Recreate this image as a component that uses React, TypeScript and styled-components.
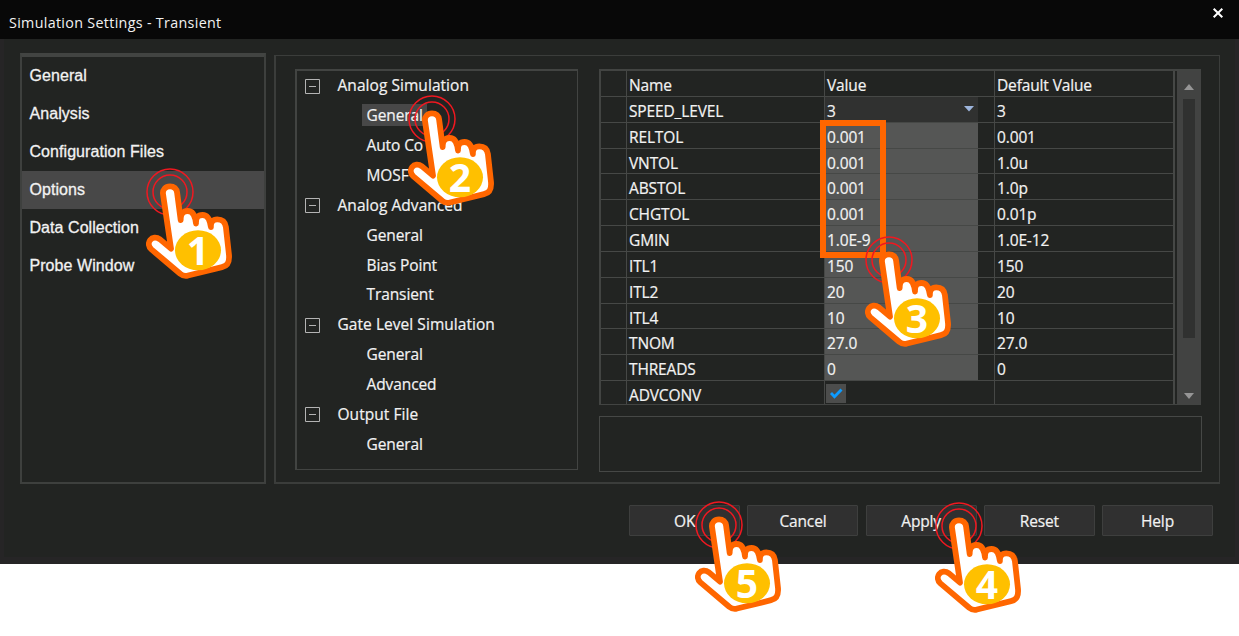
import React from "react";
import styled, { createGlobalStyle } from "styled-components";

const Global = createGlobalStyle`
  * { box-sizing: border-box; }
  body { margin: 0; background: #fff; overflow: hidden; }
`;

const Page = styled.div`
  position: relative;
  width: 1239px;
  height: 636px;
  overflow: hidden;
  background: #fff;
  color: #f2f2f2;
  font-family: "Open Sans", "Noto Sans", sans-serif;
  font-size: 15.5px;
  letter-spacing: -0.14px;
  white-space: nowrap;
  -webkit-text-stroke: 0.2px #f2f2f2;
`;

const Dialog = styled.div`
  height: 564px;
  background: #222422;
  box-shadow: inset 4px 0 #262526, inset -4px -7px #262526;
  display: flex;
  flex-direction: column;
`;

const TitleBar = styled.header`
  height: 39px;
  flex: none;
  background: #080808;
  display: flex;
  justify-content: space-between;
  padding: 12px 15px 0 9px;
  line-height: 22px;
  font-size: 14.3px;
  letter-spacing: 0.32px;
  -webkit-text-stroke: 0;
`;

const CloseIcon = styled.svg`
  width: 12px;
  height: 12px;
  margin-top: -5px;
`;

const Content = styled.div`
  display: flex;
  height: 445px;
  padding: 14px 19px 0 20px;
  gap: 8px;
`;

const Sidebar = styled.nav`
  width: 246px;
  height: 431px;
  border: 2px solid #3e403e;
  border-top: 4px solid #424442;
  font-family: "Liberation Sans", Arial, sans-serif;
  font-size: 16px;
  letter-spacing: 0.06px;
`;

const SidebarItem = styled.div<{ $active?: boolean }>`
  height: 38px;
  line-height: 38px;
  padding-left: 7.5px;
  background: ${(p) => (p.$active ? "#484848" : "transparent")};
  -webkit-text-stroke: 0.3px #f2f2f2;
`;

const Panel = styled.main`
  width: 946px;
  height: 429px;
  margin-top: 2px;
  border: 2px solid #3b3d3b;
  border-width: 1px 1px 2px 2px;
  display: flex;
  padding: 13px 16px 0 19px;
  gap: 21px;
`;

const Tree = styled.div`
  width: 283px;
  height: 401px;
  border: 1px solid #424442;
  border-width: 2px 1px 1px 2px;
  padding-left: 8px;
`;

const TreeRow = styled.div<{ $child?: boolean }>`
  height: 29.87px;
  display: flex;
  align-items: center;
  padding-left: ${(p) => (p.$child ? "57px" : "0")};
  letter-spacing: ${(p) => (p.$child ? "-0.1px" : "0.05px")};
`;

const Toggle = styled.svg`
  width: 15px;
  height: 15px;
  margin: 1px 13px 0 0;
`;

const TreeLabel = styled.span<{ $active?: boolean }>`
  height: 22px;
  line-height: 22px;
  margin-bottom: 1px;
  padding: 0 4px 0 4.5px;
  background: ${(p) => (p.$active ? "#484848" : "transparent")};
`;

const Right = styled.div`
  width: 603px;
  display: flex;
  flex-direction: column;
  gap: 11px;
`;

const TableFrame = styled.div`
  width: 602px;
  height: 336px;
  display: flex;
  justify-content: space-between;
  overflow: hidden;
  border: 2px solid #424442;
  border-right: 0;
  border-bottom-width: 1px;
`;

const Table = styled.div`
  width: 574px;
  border-right: 1px solid #464846;
`;

const Row = styled.div`
  display: grid;
  grid-template-columns: 26px 198px 170px 179px;
  height: 25.85px;
`;

const Cell = styled.div`
  border-right: 1px solid #464846;
  border-bottom: 1px solid #464846;
  padding-left: 2px;
  line-height: 28px;
  overflow: hidden;
`;

const ValueCell = styled(Cell)`
  padding: 0 16px 0 0;
`;

const Field = styled.div<{ $kind: "edit" | "select" | "plain" }>`
  height: 100%;
  padding: 0 3px 0 2px;
  display: flex;
  justify-content: space-between;
  background: ${(p) => (p.$kind === "edit" ? "#555655" : p.$kind === "select" ? "#303130" : "transparent")};
`;

const Check = styled.svg`
  width: 20px;
  height: 19px;
  margin: 3px 0 0 -1px;
`;

const Scrollbar = styled.div`
  width: 24px;
  background: #424342;
  display: flex;
  flex-direction: column;
  align-items: center;
  padding: 13px 1px 0 0;
`;

const Thumb = styled.div`
  width: 12px;
  height: 239px;
  margin: 9px 0 55px;
  background: #303130;
`;

const Arrow = styled.svg`
  display: block;
  flex: none;
`;

const SelectArrow = styled(Arrow)`
  margin-top: 9px;
`;

const Description = styled.div`
  height: 56px;
  border: 1px solid #464846;
`;

const Footer = styled.footer`
  display: flex;
  justify-content: flex-end;
  gap: 7.2px;
  padding: 21px 26px 0 0;
`;

const Button = styled.button`
  width: 111px;
  height: 31px;
  padding: 1px 0 0;
  border: 1px solid #3e3f3e;
  border-radius: 1px;
  background: #303030;
  color: inherit;
  font: inherit;
  letter-spacing: inherit;
`;

const Highlight = styled.div`
  position: absolute;
  left: 820px;
  top: 120px;
  width: 66px;
  height: 138px;
  border: 6px solid #ff6600;
`;

const HandSvg = styled.svg<{ $x: number; $y: number }>`
  position: absolute;
  left: ${(p) => p.$x}px;
  top: ${(p) => p.$y}px;
  width: 90px;
  height: 114px;
  -webkit-text-stroke: 0;
`;

const Hand = ({ n, x, y }: { n: number; x: number; y: number }) => (
  <HandSvg $x={x} $y={y} viewBox="0 0 90 114">
    <g fill="none" stroke="#f01820" strokeWidth="1.5">
      <circle cx="24" cy="24" r="23" />
      <circle cx="24" cy="24" r="17" />
    </g>
    <path
      d="M17 26C16.4 21.8 19.5 18.3 24 18.3C28 18.3 30.6 20.7 31.1 24.5L34.7 52C34.4 45.8 37.3 43 41.8 43C46.4 43 49 46.6 50 55.5C49.7 49.5 52 47 56.6 47C61.7 47 63.9 50.8 64.9 59C64.6 54 66.8 51.4 71.3 51.4C76.8 51.4 79.2 54.2 79.9 59L83 87C83.6 95 81.2 98 76 99.2L42 107.5C38.8 108.5 36.6 107.6 34.2 105.7L5.4 81.4C-1.2 75.4 6 65.7 14 71.4L25 80.6Z"
      fill="#fff"
      stroke="#ff6600"
      strokeWidth="5.8"
      strokeLinejoin="round"
    />
    <ellipse cx="52" cy="82.3" rx="23" ry="20" fill="#ffc000" />
    <text x="52" y="96.5" fill="#fff" textAnchor="middle" fontFamily="Open Sans, sans-serif" fontWeight="700" fontSize="39" letterSpacing="0">
      {n}
    </text>
  </HandSvg>
);

const sections = ["General", "Analysis", "Configuration Files", "Options", "Data Collection", "Probe Window"];

const tree = [
  { title: "Analog Simulation", items: ["General", "Auto Co", "MOSF"] },
  { title: "Analog Advanced", items: ["General", "Bias Point", "Transient"] },
  { title: "Gate Level Simulation", items: ["General", "Advanced"] },
  { title: "Output File", items: ["General"] },
];

const rows = [
  ["SPEED_LEVEL", "3", "3"],
  ["RELTOL", "0.001", "0.001"],
  ["VNTOL", "0.001", "1.0u"],
  ["ABSTOL", "0.001", "1.0p"],
  ["CHGTOL", "0.001", "0.01p"],
  ["GMIN", "1.0E-9", "1.0E-12"],
  ["ITL1", "150", "150"],
  ["ITL2", "20", "20"],
  ["ITL4", "10", "10"],
  ["TNOM", "27.0", "27.0"],
  ["THREADS", "0", "0"],
];

export default function App() {
  return (
    <>
      <Global />
      <Page>
        <Dialog>
          <TitleBar>
            <span>Simulation Settings - Transient</span>
            <CloseIcon viewBox="0 0 12 12">
              <path d="M1.7 1.7L10.3 10.3M10.3 1.7L1.7 10.3" stroke="#fff" strokeWidth="2" />
            </CloseIcon>
          </TitleBar>
          <Content>
            <Sidebar>
              {sections.map((s) => (
                <SidebarItem key={s} $active={s === "Options"}>{s}</SidebarItem>
              ))}
            </Sidebar>
            <Panel>
              <Tree>
                {tree.map((g, gi) => (
                  <React.Fragment key={g.title}>
                    <TreeRow>
                      <Toggle viewBox="0 0 15 15">
                        <path d="M.5 .5H14.5V14.5H.5ZM4 7.5H11" fill="none" stroke="#b4b4b4" />
                      </Toggle>
                      <TreeLabel>{g.title}</TreeLabel>
                    </TreeRow>
                    {g.items.map((t, i) => (
                      <TreeRow key={t} $child>
                        <TreeLabel $active={gi === 0 && i === 0}>{t}</TreeLabel>
                      </TreeRow>
                    ))}
                  </React.Fragment>
                ))}
              </Tree>
              <Right>
                <TableFrame>
                  <Table>
                    <Row>
                      <Cell />
                      <Cell>Name</Cell>
                      <Cell>Value</Cell>
                      <Cell>Default Value</Cell>
                    </Row>
                    {rows.map(([name, value, def], i) => (
                      <Row key={name}>
                        <Cell />
                        <Cell>{name}</Cell>
                        <ValueCell>
                          <Field $kind={i === 0 ? "select" : "edit"}>
                            {value}
                            {i === 0 && (
                              <SelectArrow width="12" height="6" viewBox="0 0 12 6">
                                <path d="M1 0H11L6 5.5Z" fill="#9db5dc" />
                              </SelectArrow>
                            )}
                          </Field>
                        </ValueCell>
                        <Cell>{def}</Cell>
                      </Row>
                    ))}
                    <Row>
                      <Cell />
                      <Cell>ADVCONV</Cell>
                      <ValueCell>
                        <Field $kind="plain">
                          <Check viewBox="0 0 20 19">
                            <path d="M0 0H20V19H0Z" fill="#4c4d4c" />
                            <path d="M5 9L8.5 12.7L15.5 5.5" fill="none" stroke="#0d9bff" strokeWidth="2.8" />
                          </Check>
                        </Field>
                      </ValueCell>
                      <Cell />
                    </Row>
                  </Table>
                  <Scrollbar>
                    <Arrow width="10" height="6" viewBox="0 0 10 6">
                      <path d="M0 6L5 0L10 6Z" fill="#969696" />
                    </Arrow>
                    <Thumb />
                    <Arrow width="10" height="6" viewBox="0 0 10 6">
                      <path d="M0 0H10L5 6Z" fill="#969696" />
                    </Arrow>
                  </Scrollbar>
                </TableFrame>
                <Description />
              </Right>
            </Panel>
          </Content>
          <Footer>
            {["OK", "Cancel", "Apply", "Reset", "Help"].map((b) => (
              <Button key={b}>{b}</Button>
            ))}
          </Footer>
        </Dialog>
        <Highlight />
        <Hand n={1} x={146} y={168} />
        <Hand n={2} x={407.7} y={95} />
        <Hand n={3} x={865} y={236} />
        <Hand n={5} x={695} y={501} />
        <Hand n={4} x={935} y={502} />
      </Page>
    </>
  );
}
